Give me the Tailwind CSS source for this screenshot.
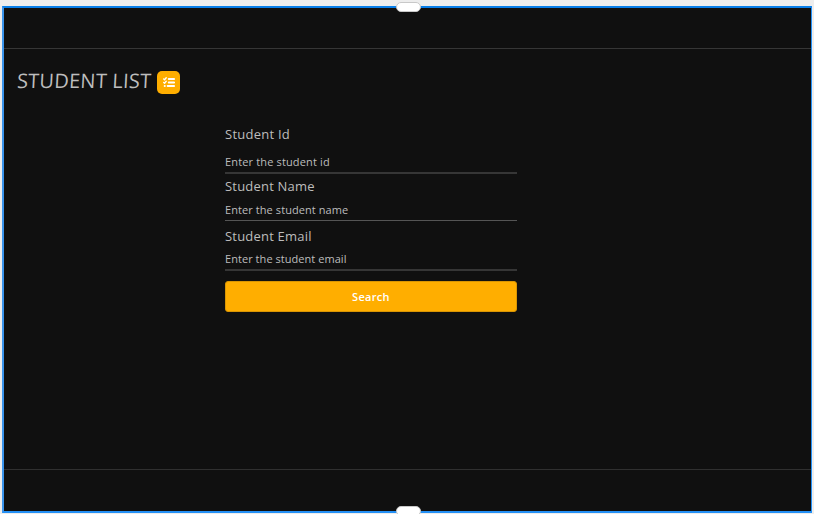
<!DOCTYPE html>
<html lang="en">
<head>
<meta charset="utf-8">
<title>Student List</title>
<script src="https://cdn.jsdelivr.net/npm/@tailwindcss/browser@4"></script>
</head>
<body class="relative h-[514px] w-[814px] overflow-hidden bg-[#ededed] pl-[2px] pt-[6px] font-['Open_Sans',sans-serif] text-[#bdbdbd]">
  <div class="h-[507px] w-[810px] border-2 border-r border-[#2490f5] border-t-[#087ee8] border-l-[#3b95ed] bg-[#101010]">
    <header class="h-[41px] border-b border-[#363636]"></header>
    <main class="h-[421px] border-b border-[#303030] pt-[21px]">
      <div class="flex h-[24px] items-center pl-[13px]">
        <h1 class="w-[140px] whitespace-nowrap text-[20px] leading-6"><span class="inline-block -translate-y-px -skew-x-3 tracking-[0.25px]">STUDENT LIST</span></h1>
        <span class="flex size-[23px] items-center justify-center rounded-[5px] bg-[#ffae00]">
          <svg class="h-[11px] w-[12px]" viewBox="0 0 12 11" fill="none" stroke="#fff" stroke-linecap="round">
            <path stroke-width="1.4" d="M.7 1.9l.9.8L3.2.8M.7 5.4l.9.8 1.6-1.9"/>
            <path stroke-width="1.8" d="M5.7 2h5.5M5.7 5.5h5.5M4.6 9h6.6"/>
            <path stroke-width="2" d="M1.7 9h.1"/>
          </svg>
        </span>
      </div>
      <form class="ml-[221px] mt-[31px] w-[292px] font-medium">
        <label class="block h-[20px] whitespace-nowrap text-[13px] leading-[18px]"><span class="tracking-[0.25px]">Student Id</span></label>
        <div class="mt-[8px] h-[21px] border-b-2 border-[#363636] text-[11px] leading-[17px]"><span class="tracking-[0.15px]">Enter the student id</span></div>
        <label class="mt-[3px] block h-[20px] whitespace-nowrap text-[13px] leading-[18px]"><span class="tracking-[0.2px]">Student Name</span></label>
        <div class="mt-[4px] h-[20px] border-b border-[#555] text-[11px] leading-[18px]"><span class="tracking-[0.08px]">Enter the student name</span></div>
        <label class="mt-[6px] block h-[20px] whitespace-nowrap text-[13px] leading-[18px]"><span class="tracking-[0.2px]">Student Email</span></label>
        <div class="mt-[3px] h-[21px] border-b-2 border-[#363636] text-[11px] leading-[18px]"><span class="tracking-[0.05px]">Enter the student email</span></div>
        <button type="button" class="mt-[10px] flex h-[31px] w-full items-center justify-center rounded-[3px] border border-[#d99503] bg-[#ffae00] pt-px text-[11px] font-semibold tracking-[0.3px] text-white">Search</button>
      </form>
    </main>
  </div>
  <span class="absolute left-[396px] top-[2px] h-[10px] w-[25px] rounded-full border border-[#c8c8c8] bg-white"></span>
  <span class="absolute left-[396px] top-[506px] h-[10px] w-[25px] rounded-full border border-[#c8c8c8] bg-white"></span>
</body>
</html>
